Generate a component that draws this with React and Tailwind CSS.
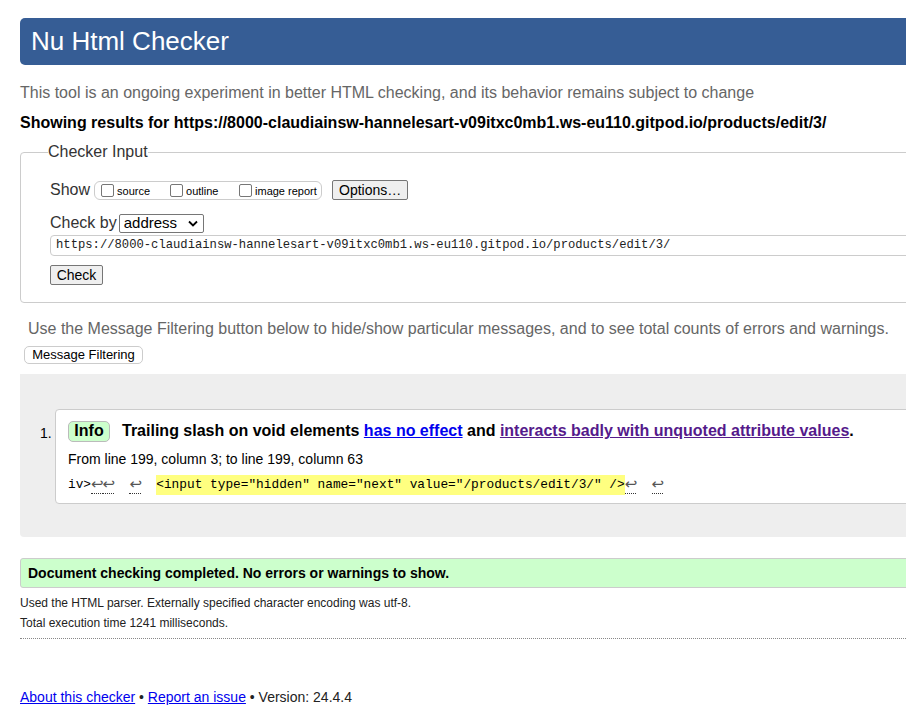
import React from "react";

const url = "https://8000-claudiainsw-hannelesart-v09itxc0mb1.ws-eu110.gitpod.io/products/edit/3/";

const Ret = () => (
  <span className="inline-block w-[11.5px] h-[17px] text-center text-[15px] leading-[15px] text-[#555] border-b border-dotted border-[#333] font-['DejaVu_Sans',sans-serif]">↩</span>
);

const Btn = ({ children, className = "" }) => (
  <div className={`h-[20px] px-[6px] flex items-center bg-[#efefef] border border-[#767676] rounded-[2px] text-[14px] text-black ${className}`}>
    {children}
  </div>
);

const Check = ({ label, className = "" }) => (
  <div className={`flex items-center ${className}`}>
    <span className="w-[13px] h-[13px] border border-[#767676] rounded-[2px] bg-white mr-[3px]" />
    <span className="text-[11px] leading-none mt-[3px]">{label}</span>
  </div>
);

export default function App() {
  return (
    <div className="w-[906px] h-[722px] overflow-hidden bg-white text-black font-['Liberation_Sans',Arial,sans-serif]">
      <div className="w-[960px] pl-[20px]">
        {/* Header */}
        <div className="mt-[18px] h-[47px] bg-[#365d95] rounded-l-[5px] flex items-center pl-[11px] text-white text-[26px]">
          Nu Html Checker
        </div>

        <p className="mt-[19px] text-[16px] leading-[18px] text-[#666]">
          This tool is an ongoing experiment in better HTML checking, and its behavior remains subject to change
        </p>
        <p className="mt-[12px] text-[16px] leading-[18px] font-bold">
          Showing results for {url}
        </p>

        {/* Checker input */}
        <fieldset className="mt-[11px] border border-[#ccc] rounded-[4px] pl-[29px] pb-[17px]">
          <legend className="text-[16px] leading-[18px] text-[#333] -ml-[2px] px-0">Checker Input</legend>

          <div className="mt-[19px] flex items-center h-[20px]">
            <span className="text-[16px] text-[#333] mr-[4px]">Show</span>
            <div className="h-[19px] w-[228px] border border-[#ccc] rounded-[6px] flex items-center pl-[6px]">
              <Check label="source" className="w-[69px]" />
              <Check label="outline" className="w-[69px]" />
              <Check label="image report" />
            </div>
            <Btn className="ml-[10px] w-[76px]">Options…</Btn>
          </div>

          <div className="mt-[14px] flex items-center h-[18px]">
            <span className="text-[16px] text-[#333] mr-[2px]">Check by</span>
            <div className="w-[85px] h-[19px] border border-[#767676] rounded-[2px] flex items-center justify-between pl-[4px] pr-[5px] text-[15px]">
              <span>address</span>
              <svg width="10" height="7" viewBox="0 0 10 7">
                <path d="M1 1.5 L5 5.5 L9 1.5" fill="none" stroke="#000" strokeWidth="1.8" />
              </svg>
            </div>
          </div>

          <div className="mt-[3px] h-[21px] border border-[#ccc] rounded-[4px] flex items-center pl-[5px] font-['Liberation_Mono',monospace] text-[12.2px] text-[#222]">
            {url}
          </div>

          <Btn className="mt-[9px] w-[53px] justify-center">Check</Btn>
        </fieldset>

        <p className="mt-[17px] ml-[8px] text-[16px] leading-[18px] text-[#666]">
          Use the Message Filtering button below to hide/show particular messages, and to see total counts of errors and warnings.
        </p>
        <div className="mt-[8px] ml-[4px] w-[119px] h-[18px] border border-[#ccc] rounded-[5px] flex items-center justify-center text-[13px]">
          Message Filtering
        </div>

        {/* Results */}
        <div className="mt-[10px] h-[163px] bg-[#eee] rounded-bl-[4px] pt-[35px] pl-[35px]">
          <div className="relative bg-white border border-[#ccc] rounded-[4px] h-[95px] pl-[12px] pt-[10px]">
            <span className="absolute -left-[16px] top-[13px] text-[14px]">1.</span>
            <div className="flex items-center h-[22px]">
              <span className="h-[21px] w-[42px] bg-[#ccffcc] border border-[#bbb] rounded-[5px] flex items-center justify-center text-[16px] font-bold">Info</span>
              <span className="ml-[12px] text-[16px] font-bold">
                Trailing slash on void elements{" "}
                <a href="#" className="text-[#0000ee] underline">has no effect</a> and{" "}
                <a href="#" className="text-[#551a8b] underline">interacts badly with unquoted attribute values</a>.
              </span>
            </div>
            <p className="mt-[9px] text-[14px] leading-[16px]">From line 199, column 3; to line 199, column 63</p>
            <div className="mt-[9px] flex items-center h-[18px] font-['Liberation_Mono',monospace] text-[12.8px] whitespace-pre">
              <span>iv&gt;</span>
              <span className="flex"><Ret /><Ret /></span>
              <span>{"  "}</span>
              <Ret />
              <span>{"  "}</span>
              <span className="bg-[#ffff80]">{'<input type="hidden" name="next" value="/products/edit/3/" />'}</span>
              <Ret />
              <span>{"  "}</span>
              <Ret />
            </div>
          </div>
        </div>

        <div className="mt-[21px] h-[30px] bg-[#ccffcc] border border-[#ccc] rounded-l-[3px] flex items-center pl-[7px] text-[14px] font-bold">
          Document checking completed. No errors or warnings to show.
        </div>

        <p className="mt-[8px] text-[12px] leading-[14px] text-[#222]">Used the HTML parser. Externally specified character encoding was utf-8.</p>
        <p className="mt-[6px] text-[12px] leading-[14px] text-[#222]">Total execution time 1241 milliseconds.</p>
        <div className="mt-[8px] border-t border-dotted border-[#888]" />

        <p className="mt-[50px] text-[14px] leading-[16px] text-[#222]">
          <a href="#" className="text-[#0000ee] underline">About this checker</a> •{" "}
          <a href="#" className="text-[#0000ee] underline">Report an issue</a> • Version: 24.4.4
        </p>
      </div>
    </div>
  );
}
